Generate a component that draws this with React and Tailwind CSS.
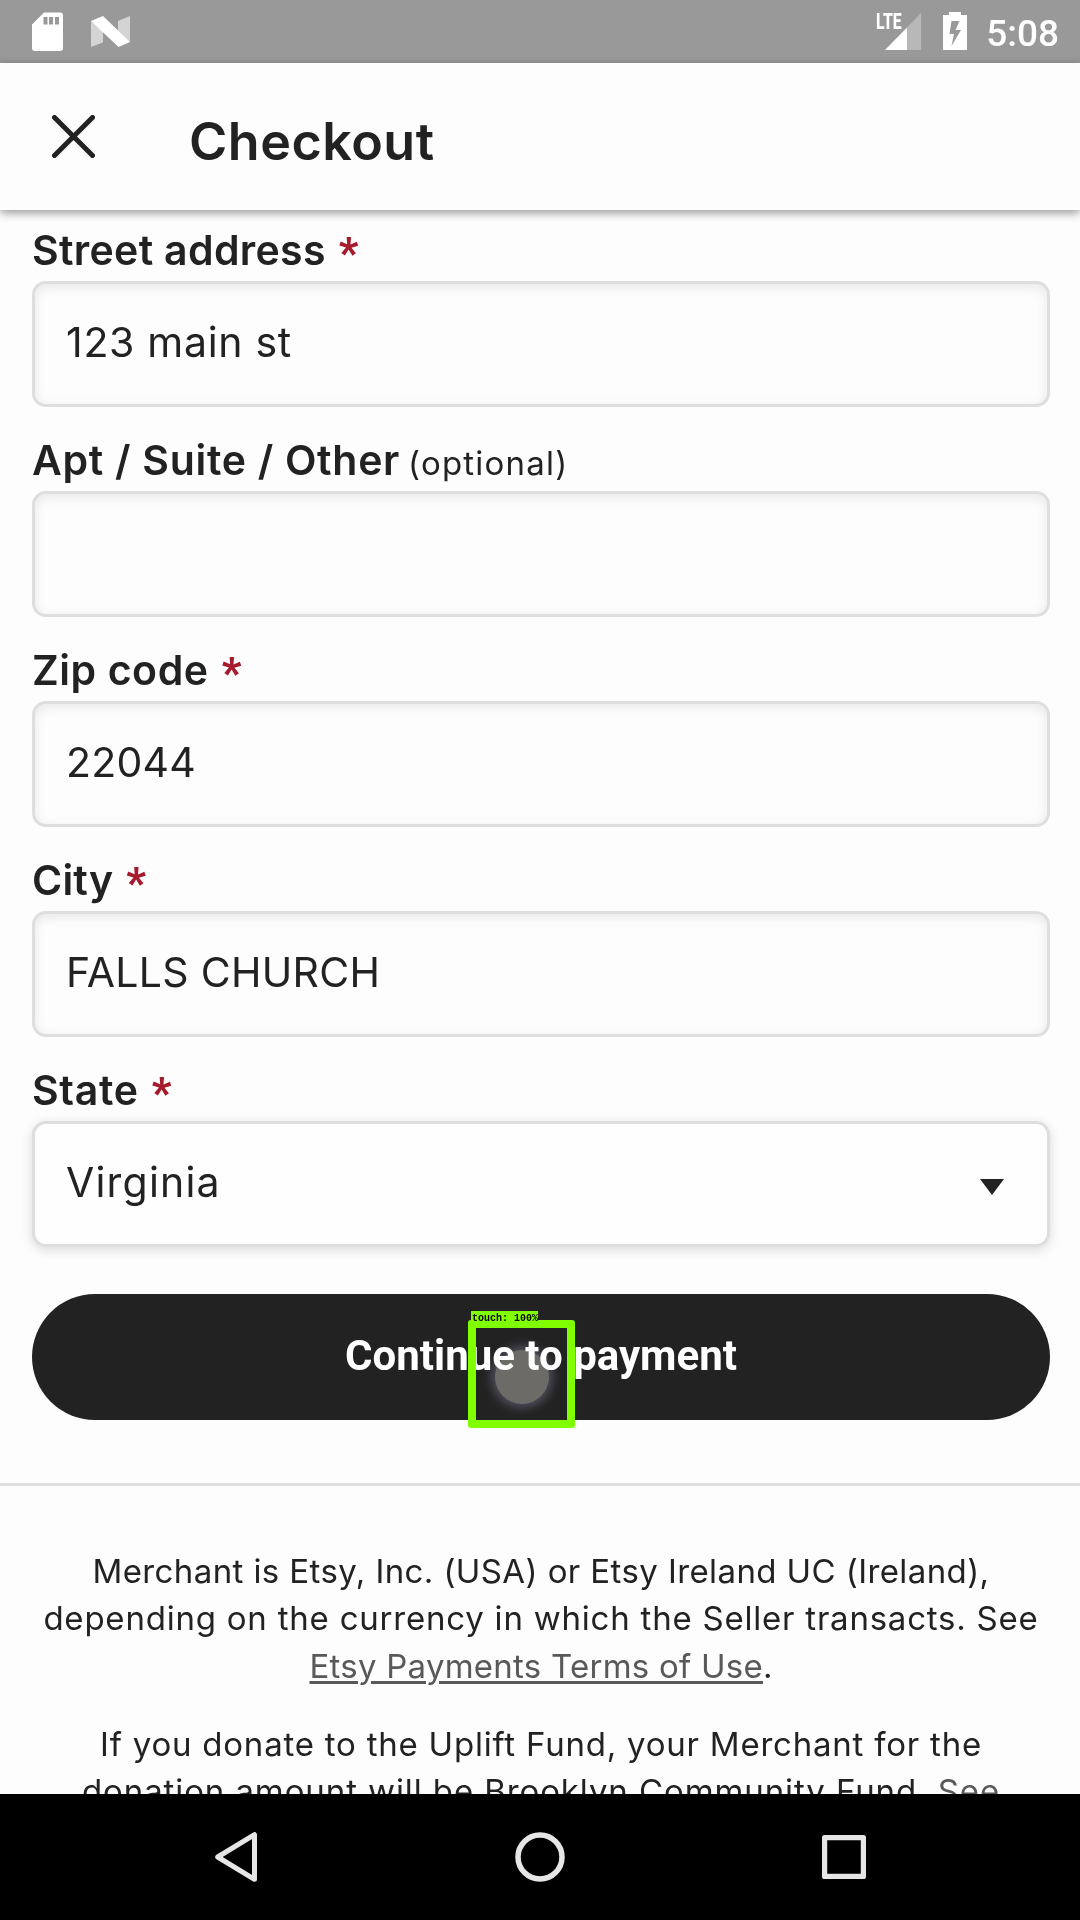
import React from "react";

const fieldBase =
  "flex h-[126px] items-center rounded-[14px] border-[3px] border-[#dedede] pb-[3px] text-[41px] leading-none font-[370]";

function Label({ children, spacing, required, optional }) {
  return (
    <div className="h-[84px] whitespace-nowrap pt-[22px] text-[41px] leading-[62px] font-semibold">
      <span className={spacing}>{children}</span>
      {required && (
        <span className="relative top-[2px] ml-[13px] font-[Roboto,sans-serif] text-[42px] leading-none font-black text-[#a61a2e]">*</span>
      )}
      {optional && (
        <span className="ml-[8px] text-[33px] leading-none font-normal tracking-[1.2px]">(optional)</span>
      )}
    </div>
  );
}

function Input({ value, spacing }) {
  return (
    <div className={`${fieldBase} pl-[31px] shadow-[inset_0_3px_12px_rgba(0,0,0,0.09)]`}>
      <span className={spacing}>{value}</span>
    </div>
  );
}

function StatusBar() {
  return (
    <div className="flex h-[63px] shrink-0 items-start bg-[#999999] text-white">
      <svg className="mt-[12px] ml-[32px] h-[39px] w-[31px]" viewBox="0 0 31 39">
        <path fill="white" fillRule="evenodd" d="M12 .5H28a3 3 0 0 1 3 3V36a3 3 0 0 1-3 3H3a3 3 0 0 1-3-3V12.500ZM11.500 5v7.500h4V5ZM17 5v7.500h4V5ZM23 5v7.500h4V5Z" />
      </svg>
      <svg className="mt-[16px] ml-[28px] h-[31px] w-[39px]" viewBox="0 0 39 31">
        <path fill="#d4d4d4" d="M0 5V31L12 26.500V13ZM39 0 27 5V18L39 26Z" />
        <path fill="white" d="M0 5 12 0 39 26 27.500 31Z" />
      </svg>
      <div className="relative mt-[12px] ml-auto h-[38px] w-[46px]">
        <span className="absolute top-[1px] left-0 origin-left scale-x-[.72] font-[Roboto,sans-serif] text-[22px] leading-[18px] font-extrabold">
          LTE
        </span>
        <svg className="absolute top-[1px] left-[9px] h-[37px] w-[36px]" viewBox="0 0 36 37">
          <path fill="#b8b8b8" d="M36 0V37H22V14.400Z" />
          <path fill="white" d="M22 14.400V37H0Z" />
        </svg>
      </div>
      <svg className="mt-[12px] ml-[21px] h-[38px] w-[24px]" viewBox="0 0 24 38">
        <path fill="white" fillRule="evenodd" d="M6 0H18V3H24V38H0V3H6ZM8.500 9 6.500 22H11L8.500 34 18 18H12.500L16.500 9Z" />
      </svg>
      <span className="mt-[12px] mr-[21px] ml-[19px] font-[Roboto,sans-serif] text-[37px] leading-[44px] font-medium">5:08</span>
    </div>
  );
}

function TouchMarker() {
  return (
    <>
      <div className="absolute top-[56px] left-[463px] h-[54px] w-[54px] rounded-full bg-[#565450] mix-blend-screen shadow-[0_0_10px_4px_rgba(66,62,84,0.8)]" />
      <div className="absolute top-[17px] left-[436px]">
        <div className="h-[12px] w-[67px] translate-x-[3px] bg-[#80ff00]">
          <span className="block pl-px font-['Liberation_Mono',monospace] text-[10px] leading-[15px] font-bold whitespace-pre text-black">
            touch: 100%
          </span>
        </div>
        <div className="-mt-[3px] h-[108px] w-[107px] rounded-[3px] border-[8px] border-[#80ff00]" />
      </div>
    </>
  );
}

function NavBar() {
  return (
    <div className="relative flex h-[126px] shrink-0 items-center justify-between bg-black pr-[214px] pl-[215px]">
      <svg className="h-[50px] w-[42px]" viewBox="0 0 42 50" fill="none" stroke="#e6e6e6" strokeWidth="5" strokeLinejoin="round">
        <path d="M39.500 2.700V47.300L2.700 25Z" />
      </svg>
      <svg className="h-[50px] w-[50px]" viewBox="0 0 50 50" fill="none" stroke="#e6e6e6" strokeWidth="5.500">
        <circle cx="25" cy="25" r="22" />
      </svg>
      <svg className="h-[44px] w-[44px]" viewBox="0 0 44 44" fill="none" stroke="#e6e6e6" strokeWidth="5.200" strokeLinejoin="round">
        <path d="M2.600 2.600H41.400V41.400H2.600Z" />
      </svg>
    </div>
  );
}

export default function App() {
  return (
    <div className="flex h-[1920px] w-[1080px] flex-col overflow-hidden bg-[#fdfdfd] font-[Inter,sans-serif] text-[#222222]">
      <StatusBar />
      <header className="relative z-10 flex h-[147px] shrink-0 items-center bg-[#fdfdfd] shadow-[0_3px_9px_rgba(0,0,0,0.4)]">
        <svg className="mb-[1px] ml-[52px] h-[43px] w-[43px]" viewBox="0 0 43 43" fill="none" stroke="#222222" strokeWidth="5" strokeLinecap="round">
          <path d="M2.500 2.500 40.500 40.500M40.500 2.500 2.500 40.500" />
        </svg>
        <h1 className="mt-[11px] ml-[94px] text-[52px] leading-none font-semibold tracking-[.5px]">Checkout</h1>
      </header>

      <main className="-mt-[13px] min-h-0 flex-1 overflow-hidden">
        <form className="pr-[30px] pl-[32px]">
          <Label spacing="tracking-[.33px]" required>Street address</Label>
          <Input value="123 main st" spacing="tracking-[.7px]" />
          <Label spacing="tracking-[.7px]" optional>Apt / Suite / Other</Label>
          <Input value="" />
          <Label spacing="tracking-[.57px]" required>Zip code</Label>
          <Input value="22044" spacing="tracking-[.2px]" />
          <Label spacing="tracking-[.2px]" required>City</Label>
          <Input value="FALLS CHURCH" spacing="tracking-[.3px]" />
          <Label spacing="tracking-[.7px]" required>State</Label>
          <div className={`${fieldBase} justify-between bg-[#fefefe] pr-[43px] pl-[31px] shadow-[0_3px_12px_rgba(0,0,0,0.14)]`}>
            <span className="tracking-[1.2px]">Virginia</span>
            <svg className="mt-[8px] h-[16px] w-[24px]" viewBox="0 0 24 16">
              <path fill="#222222" d="M0 0H24L12 16Z" />
            </svg>
          </div>
          <div className="relative mt-[47px] flex h-[126px] items-center justify-center rounded-full bg-[#222222] pb-[3px] font-[Roboto,sans-serif] text-[42px] leading-none font-bold text-white">
            Continue to payment
            <TouchMarker />
          </div>
        </form>

        <footer className="mt-[63px] border-t-[3px] border-[#dfdfdf] pt-[62px] pl-[2px] text-center text-[33px] leading-[47.25px] whitespace-nowrap">
          <p>
            <span className="tracking-[.4px]">Merchant is Etsy, Inc. (USA) or Etsy Ireland UC (Ireland),</span>
            <br />
            <span className="tracking-[.78px]">depending on the currency in which the Seller transacts. See</span>
            <br />
            <a className="tracking-[.25px] text-[#595959] underline decoration-[3px] underline-offset-[3px]">Etsy Payments Terms of Use</a>.
          </p>
          <p className="mt-[31px]">
            <span className="tracking-[.78px]">If you donate to the Uplift Fund, your Merchant for the</span>
            <br />
            <span className="tracking-[.9px]">
              donation amount will be Brooklyn Community Fund. <a className="text-[#595959]">See</a>
            </span>
          </p>
        </footer>
      </main>
      <NavBar />
    </div>
  );
}
